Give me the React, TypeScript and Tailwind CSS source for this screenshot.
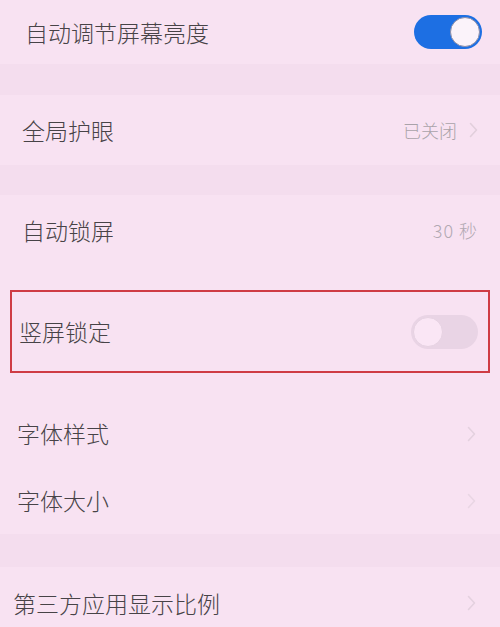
const Chevron = ({ className = "" }: { className?: string }) => (
  <svg className={className} width="9" height="16" viewBox="0 0 9 16" fill="none">
    <path d="M1.5 1.5L7.5 8l-6 6.5" stroke="currentColor" strokeWidth="1.6" strokeLinecap="round" strokeLinejoin="round" />
  </svg>
);

const App = () => {
  return (
    <div
      className="w-[500px] h-[627px] overflow-hidden bg-[#f8e2f2] text-[#474347] font-light"
      style={{ fontFamily: '"Noto Sans CJK SC", "Noto Sans", sans-serif' }}
    >
      {/* 自动调节屏幕亮度 */}
      <div className="h-[64px] flex items-center justify-between pl-[25px] pr-[18px]">
        <span className="text-[23px] leading-none">自动调节屏幕亮度</span>
        <div className="w-[68px] h-[34px] rounded-full bg-[#1d6fe3] flex items-center justify-end pr-[2px]">
          <div className="w-[30px] h-[30px] rounded-full bg-[#fbf3fa] border border-[#8c8ea8]" />
        </div>
      </div>

      <div className="h-[31px] bg-[#f4ddee]" />

      {/* 全局护眼 */}
      <div className="h-[70px] flex items-center justify-between pl-[22px] pr-[22px]">
        <span className="text-[23px] leading-none">全局护眼</span>
        <div className="flex items-center gap-[12px] text-[#a9a2a9]">
          <span className="text-[18px] leading-none">已关闭</span>
          <Chevron className="text-[#e2cfdc]" />
        </div>
      </div>

      <div className="h-[30px] bg-[#f4ddee]" />

      {/* 自动锁屏 */}
      <div className="h-[70px] flex items-center justify-between pl-[22px] pr-[22px]">
        <span className="text-[23px] leading-none">自动锁屏</span>
        <span className="text-[18px] leading-none text-[#b2a9b2] tracking-[1px]">30 秒</span>
      </div>

      <div className="h-[25px]" />

      {/* 竖屏锁定 */}
      <div className="mx-[10px] h-[83px] border-2 border-[#cf3c45] flex items-center justify-between pl-[7px] pr-[10px]">
        <span className="text-[23px] leading-none">竖屏锁定</span>
        <div className="w-[67px] h-[34px] rounded-full bg-[#e9d4e5] flex items-center pl-[2px]">
          <div className="w-[30px] h-[30px] rounded-full bg-[#fae6f5] border border-[#e6d2e2]" />
        </div>
      </div>

      <div className="h-[27px]" />

      {/* 字体样式 */}
      <div className="h-[67px] flex items-center justify-between pl-[17px] pr-[24px]">
        <span className="text-[23px] leading-none">字体样式</span>
        <Chevron className="text-[#e4d1df]" />
      </div>

      {/* 字体大小 */}
      <div className="h-[67px] flex items-center justify-between pl-[17px] pr-[24px]">
        <span className="text-[23px] leading-none">字体大小</span>
        <Chevron className="text-[#e9d6e4]" />
      </div>

      <div className="h-[33px] bg-[#f4ddee]" />

      {/* 第三方应用显示比例 */}
      <div className="h-[72px] flex items-center justify-between pl-[13px] pr-[24px]">
        <span className="text-[23px] leading-none">第三方应用显示比例</span>
        <Chevron className="text-[#e4d1df]" />
      </div>
    </div>
  );
};

export default App;
